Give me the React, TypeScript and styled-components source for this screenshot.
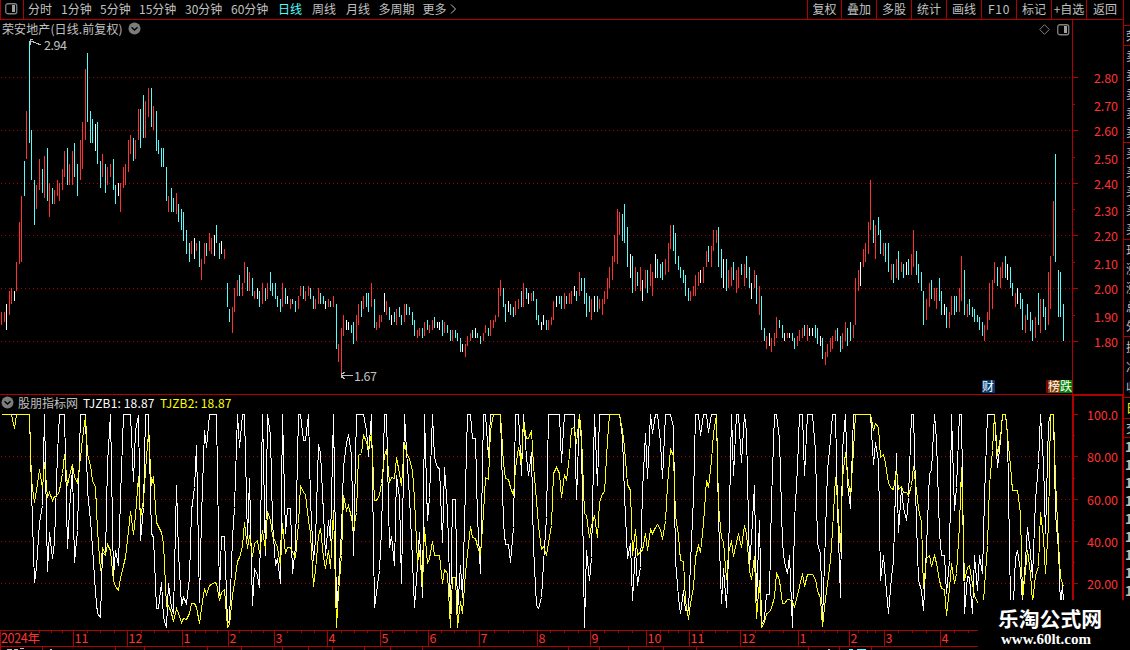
import React from 'react';
import styled, { createGlobalStyle } from 'styled-components';

const RED = '#b00000';
const LABEL_RED = '#ff3232';
const CYAN = '#54fcfc';
const GREY = '#c0c0c0';
const FONT = "'Noto Sans CJK SC', 'Liberation Sans', sans-serif";

interface Period {
	label: string;
	width: number;
	active?: boolean;
}

const PERIODS: Period[] = [
	{ label: '分时', width: 33 },
	{ label: '1分钟', width: 39 },
	{ label: '5分钟', width: 39 },
	{ label: '15分钟', width: 46 },
	{ label: '30分钟', width: 46 },
	{ label: '60分钟', width: 47 },
	{ label: '日线', width: 34, active: true },
	{ label: '周线', width: 34 },
	{ label: '月线', width: 32.5 },
	{ label: '多周期', width: 44 },
	{ label: '更多', width: 27 }
];

const TOOLS = [
	{ label: '复权', width: 34 },
	{ label: '叠加', width: 35 },
	{ label: '多股', width: 35 },
	{ label: '统计', width: 35 },
	{ label: '画线', width: 35 },
	{ label: 'F10', width: 35, spacing: 0.7 },
	{ label: '标记', width: 35 },
	{ label: '+自选', width: 35 },
	{ label: '返回', width: 37 }
];

// x, high, low, colour (r = up, c = down, w = flat)
const BARS = `1 312 325 r,4 312 322 r,6 304 330 w,9 291 315 r,11 288 304 r,14 291 301 w,16 262 291 r,19 222 264 r,21 196 262 r,24 161 196 c,
26 111 159 r,29 41 143 c,31 130 180 c,34 180 225 c,36 185 209 r,39 159 190 r,42 169 193 c,44 156 198 r,47 148 201 c,49 183 217 r,
52 188 204 c,54 190 204 r,57 180 196 r,59 183 201 r,62 169 190 r,64 151 177 r,67 148 185 c,69 164 185 r,72 151 185 r,74 143 177 c,
77 164 196 c,80 140 180 r,82 122 169 r,85 69 140 r,87 53 122 c,90 111 143 c,92 119 143 c,95 124 151 w,97 122 164 c,100 161 188 c,
102 154 177 r,105 164 193 c,107 167 185 r,110 164 177 r,113 159 190 c,115 185 204 c,118 183 196 w,120 183 212 r,123 167 188 r,125 164 185 r,
128 140 172 r,130 135 154 r,133 138 161 c,135 140 159 r,138 109 140 r,140 109 148 c,143 95 138 c,145 101 138 r,148 88 117 r,151 88 127 c,
153 106 130 r,156 111 151 c,158 140 154 c,161 148 167 c,163 148 167 c,166 167 201 c,168 196 212 r,171 188 212 c,173 198 212 c,176 193 214 r,
178 204 222 c,181 209 230 c,183 212 241 c,186 230 254 c,189 243 262 c,191 241 254 r,194 238 259 w,196 243 251 r,199 241 267 c,201 259 280 r,
204 243 264 r,206 243 256 c,209 233 251 r,211 238 254 r,214 235 256 w,216 225 243 c,219 243 259 c,221 241 254 w,224 249 259 r,227 283 307 c,
229 309 322 c,232 307 333 r,234 288 312 r,237 280 296 r,239 275 296 c,242 283 296 r,244 262 283 r,247 267 291 c,249 272 291 r,252 278 296 c,
254 291 299 r,257 288 299 w,259 291 307 c,262 283 304 r,265 288 301 c,267 283 299 r,270 272 291 c,272 283 296 c,275 283 299 c,277 296 307 c,
280 299 312 c,282 283 307 r,285 288 304 c,287 296 304 w,290 299 309 r,292 299 304 c,295 301 312 c,298 296 309 r,300 286 296 r,303 286 299 c,
305 291 301 r,308 286 296 r,310 288 299 c,313 296 309 c,315 299 309 r,318 288 304 r,320 293 304 c,323 296 304 c,325 301 309 w,328 299 307 r,
330 301 307 c,333 296 307 r,336 304 349 c,338 344 362 r,341 328 374 r,343 315 336 r,346 320 330 w,348 322 330 w,351 325 333 c,353 322 344 c,
356 315 341 r,358 304 325 r,361 301 317 c,363 296 309 r,366 293 307 c,368 293 312 c,371 283 307 r,374 299 328 c,376 322 330 r,379 315 328 r,
381 315 322 r,384 293 312 w,386 301 315 r,389 307 320 c,391 315 325 w,394 312 322 c,396 309 325 r,399 307 317 c,401 315 325 c,404 304 322 r,
406 304 315 c,409 307 315 c,412 312 325 c,414 320 336 c,417 330 338 r,419 328 336 r,422 328 338 c,424 322 336 r,427 320 330 c,429 325 333 r,
432 320 330 r,434 317 328 c,437 322 328 w,439 322 330 w,442 320 336 c,444 322 333 r,447 325 333 c,450 330 341 c,452 330 341 r,455 330 338 c,
457 333 341 c,460 338 352 c,462 344 352 w,465 344 357 r,467 336 346 r,470 333 341 r,472 330 338 c,475 328 338 w,477 333 338 c,480 336 344 c,
483 333 341 r,485 325 333 r,488 328 336 c,490 320 336 r,493 320 328 r,495 315 322 r,498 288 317 r,500 280 296 r,503 288 307 c,505 304 322 c,
508 301 312 w,510 304 315 c,513 307 317 c,515 301 315 r,518 299 309 r,521 291 307 c,523 283 307 r,526 288 299 c,528 293 304 w,531 293 301 r,
533 291 301 c,536 299 320 c,538 315 325 c,541 322 330 w,543 315 325 w,546 320 330 c,548 320 330 r,551 317 325 r,553 301 320 r,556 296 307 w,
559 296 304 c,561 296 309 c,564 293 309 r,566 296 304 c,569 293 304 r,571 291 304 r,574 286 296 w,576 291 301 c,579 272 296 r,581 278 291 c,
584 278 304 c,586 293 317 c,589 296 312 c,591 299 320 r,594 296 312 w,597 296 312 c,599 299 309 r,602 299 315 r,604 291 304 r,607 278 299 r,
609 267 288 r,612 256 280 r,614 235 262 r,617 209 264 r,619 212 235 r,622 214 241 c,624 204 243 c,627 227 267 c,630 254 278 w,632 256 293 c,
635 267 291 r,637 272 286 c,640 267 291 r,642 280 301 w,645 270 288 r,647 270 293 c,650 264 286 r,652 272 296 r,655 254 278 w,657 259 278 c,
660 264 278 c,662 262 280 c,665 259 275 r,668 243 272 r,670 225 249 r,673 225 251 c,675 233 264 c,678 256 270 c,680 267 278 c,683 270 283 c,
685 275 296 c,688 288 301 c,690 291 301 r,693 286 296 r,695 275 296 r,698 272 286 r,700 270 283 w,703 267 283 r,706 251 267 r,708 246 262 c,
711 246 267 r,713 230 251 r,716 230 243 r,718 227 267 c,721 249 278 c,723 259 288 w,726 259 291 c,728 270 288 r,731 267 286 r,733 262 280 c,
736 270 293 r,738 267 288 r,741 264 275 c,744 264 286 r,746 256 278 c,749 267 288 c,751 283 299 w,754 270 288 r,756 275 304 c,759 286 315 r,
761 296 330 c,764 328 341 c,766 336 349 r,769 333 346 w,771 338 352 r,774 333 346 r,776 317 338 r,779 320 328 c,782 325 338 c,784 333 341 w,
787 333 338 r,789 333 338 w,792 333 341 c,794 338 349 c,797 336 346 r,799 330 341 r,802 328 338 r,804 325 336 c,807 325 341 r,809 328 336 w,
812 328 336 w,815 325 338 c,817 328 344 c,820 336 346 w,822 338 359 c,825 352 365 r,827 344 357 r,830 338 352 r,832 336 349 r,835 330 341 r,
837 328 341 c,840 336 352 c,842 333 349 r,845 322 341 r,847 328 346 c,850 322 341 c,853 325 338 r,855 278 325 r,858 270 291 r,860 262 286 w,
863 249 267 r,865 243 262 r,868 222 254 r,870 180 230 r,873 220 243 c,875 225 259 r,878 217 235 c,880 230 254 c,883 243 256 r,885 243 262 c,
888 243 272 c,891 264 280 r,893 264 283 c,896 259 278 r,898 251 280 c,901 262 272 r,903 264 278 c,906 262 275 w,908 259 275 c,911 254 275 r,
913 230 267 r,916 251 275 c,918 264 283 c,921 272 291 c,923 291 325 c,926 299 320 r,929 283 307 r,931 280 299 c,934 288 301 r,936 288 309 r,
939 278 301 c,941 291 315 c,944 304 315 w,946 307 328 c,949 312 328 r,951 296 315 r,954 296 315 c,956 296 312 c,959 288 312 r,961 256 301 r,
964 270 315 c,967 304 317 r,969 299 315 c,972 307 317 c,974 309 322 c,977 315 322 c,979 317 330 c,982 322 336 c,984 325 341 r,987 312 330 r,
989 283 320 r,992 280 309 r,994 262 283 r,997 267 286 c,1000 267 288 r,1002 262 278 r,1005 256 278 c,1007 264 280 w,1010 267 288 c,1012 283 296 c,
1015 293 307 r,1017 288 304 w,1020 293 309 c,1022 299 330 c,1025 315 333 r,1027 304 320 c,1030 312 331 c,1032 320 341 c,1035 317 338 r,1038 293 325 c,
1040 299 333 r,1043 299 317 c,1045 307 330 c,1048 272 325 r,1050 256 309 r,1053 201 256 r,1055 154 262 c,1058 270 317 c,1060 272 317 c,1063 304 341 c`
	.split(',')
	.map((s) => s.trim().split(' '));

const TJZB1 = `1,414 29,414 31,490 34,582 36,567 39,522 42,505 44,414 47,571 49,532 52,558 54,542 57,453 59,414 64,414 67,548 69,510 72,468 74,562 77,530
80,414 85,414 87,490 90,520 92,547 95,592 97,613 100,617 102,552 105,555 107,463 110,414 113,577 115,550 118,565 120,497 123,414 130,414 133,481
135,430 138,415 140,540 143,507 145,414 148,414 151,533 153,537 156,608 158,608 161,582 163,617 166,627 168,583 171,607 173,613 176,485 178,553
181,605 183,597 186,603 189,577 191,510 194,487 196,445 199,602 201,517 204,430 206,447 209,414 216,414 219,595 221,536 224,536 227,623 229,620
232,537 234,507 237,414 239,447 242,414 244,414 247,538 249,478 252,605 254,568 257,575 259,587 262,414 265,555 267,414 270,435 272,522 275,565
277,558 280,583 282,414 285,533 287,508 290,508 292,573 295,546 298,414 300,414 303,440 305,440 308,414 310,500 313,560 315,540 318,444 320,452
323,513 325,555 328,520 330,540 333,414 336,607 338,585 341,530 343,467 346,443 348,434 351,455 353,555 356,414 363,414 366,430 368,456 371,414
374,607 376,592 379,570 381,530 384,414 386,414 389,547 391,536 394,565 396,475 399,497 401,583 404,414 406,450 409,497 412,560 414,607 417,565
419,532 422,597 424,414 427,520 429,497 432,414 434,457 437,467 439,468 442,542 444,467 447,510 450,613 452,499 455,499 457,613 460,565 462,597
465,487 467,414 470,414 472,438 475,438 477,517 480,573 483,414 485,414 488,457 490,414 500,414 503,523 505,544 508,544 510,562 513,527 515,414
518,414 521,475 523,414 526,457 528,475 531,452 533,547 536,605 538,608 541,597 543,563 546,517 548,414 559,414 561,462 564,414 574,414 576,499
579,414 581,443 584,627 586,550 589,580 591,557 594,414 597,485 599,414 619,414 622,437 624,495 627,558 630,543 632,600 635,548 637,585 640,567
642,490 645,433 647,478 650,414 652,433 655,414 657,414 660,442 662,478 665,414 670,414 673,427 675,560 678,597 680,613 683,590 685,610 688,610
690,563 693,497 695,414 698,414 700,435 703,414 706,414 708,432 711,414 716,414 718,517 721,603 723,568 726,607 728,557 731,414 733,475 736,414
738,414 741,462 744,414 746,432 749,567 751,537 754,485 756,600 759,520 761,625 764,618 766,594 769,594 771,500 774,414 776,414 779,438 782,543
784,562 787,573 789,555 792,627 794,520 797,467 799,414 802,414 804,475 807,414 812,414 815,450 817,543 820,553 822,620 825,533 827,470 830,440
832,414 835,414 837,507 840,597 842,450 845,414 847,483 850,508 853,414 870,414 873,464 875,442 878,460 880,580 883,555 885,580 888,613 891,577
893,560 896,453 898,532 901,487 903,507 906,520 908,497 911,414 913,414 916,523 918,580 921,590 923,610 926,547 929,473 931,470 934,414 936,440
939,533 941,555 944,555 946,593 949,560 951,414 954,510 956,487 959,414 961,414 964,613 967,576 969,577 972,613 974,555 977,590 979,555 982,573
984,497 987,414 994,414 997,467 1000,440 1002,414 1005,414 1007,433 1010,602 1013,602 1015,557 1017,550 1020,570 1022,602 1025,560 1027,527
1030,553 1032,577 1035,500 1038,463 1040,414 1043,463 1045,533 1048,423 1050,414 1053,414 1055,513 1058,550 1060,605 1062,585 1063,602`;

const TJZB2 = `1,414 11,414 14,428 16,414 29,414 31,480 34,502 36,490 39,469 42,488 44,462 47,497 49,492 52,500 54,496 57,495 59,490 62,473 64,454 67,485
69,475 72,464 74,477 77,482 80,457 82,438 85,416 87,453 90,465 92,480 95,487 97,530 100,570 102,547 105,554 107,544 110,550 113,580 115,586 118,590
120,578 123,565 125,557 128,530 130,511 133,534 135,515 138,476 140,518 143,500 145,470 148,432 151,485 153,476 156,522 158,526 161,532 163,543
166,606 168,605 171,613 173,621 176,608 178,613 181,622 183,618 186,619 189,613 191,603 194,603 196,607 199,623 201,608 204,588 206,594 209,585
211,584 214,582 216,583 219,600 221,592 224,589 227,627 229,624 232,595 234,583 237,561 239,557 242,546 244,522 247,548 249,535 252,556 254,543
257,540 259,553 262,530 265,548 267,511 270,520 272,535 275,542 277,547 280,565 282,523 285,553 287,547 290,547 292,552 295,557 298,523 300,485
303,492 305,494 308,520 310,533 313,586 315,570 318,535 320,528 323,557 325,568 328,550 330,568 333,510 336,627 338,592 341,555 343,495 346,510
348,505 351,517 353,530 356,512 358,455 361,453 363,434 366,442 368,448 371,433 374,500 376,500 379,495 381,483 384,455 386,449 389,482 391,477
394,478 396,457 399,473 401,485 404,442 406,452 409,459 412,470 414,498 417,563 419,550 422,588 424,527 427,563 429,558 432,541 434,555 437,555
439,555 442,583 444,569 447,573 450,627 452,577 455,577 457,627 460,601 462,613 465,572 467,553 470,526 472,537 475,538 477,546 480,555 483,513
485,477 488,479 490,430 493,414 500,414 503,463 505,478 508,479 510,487 513,495 515,468 518,447 521,463 523,422 526,438 528,438 531,430 533,465
536,500 538,525 541,549 543,546 546,555 548,543 551,525 553,473 556,467 559,473 561,497 564,474 566,480 569,455 571,428 574,427 576,443 579,414
581,435 584,513 586,515 589,537 591,525 594,515 597,537 599,502 602,493 604,492 607,440 609,414 619,414 622,430 624,447 627,484 630,490 632,555
635,529 637,555 640,551 642,550 645,533 647,550 650,529 652,533 655,527 657,524 660,529 662,539 665,520 667,485 670,449 673,455 675,515 678,535
680,560 683,561 685,600 688,619 690,603 693,587 695,557 698,545 700,552 703,523 706,480 708,487 711,460 713,433 716,414 718,505 721,538 723,541
726,579 728,553 731,540 733,556 736,542 738,533 741,547 744,525 746,533 749,570 751,579 754,556 756,618 759,580 761,627 764,622 766,613 769,612
771,607 774,597 776,572 779,580 782,603 784,603 787,599 789,599 792,602 794,606 797,595 799,586 802,573 804,586 807,574 812,574 815,579 817,590
820,598 822,626 825,598 827,583 830,560 832,530 835,477 837,500 840,551 842,478 845,452 847,475 850,495 853,450 855,414 870,414 873,430 875,423
878,427 880,457 883,454 885,463 888,483 891,488 893,489 896,470 898,489 901,486 903,492 906,492 908,495 911,485 913,466 916,490 918,508 921,522
923,588 926,558 929,555 931,566 934,555 936,563 939,580 941,588 944,589 946,615 949,588 951,563 954,583 956,573 959,525 961,467 964,580 967,567
969,565 972,583 974,595 977,602 983,601 987,545 989,485 992,450 994,414 997,455 1000,437 1002,414 1005,414 1007,435 1010,465 1012,490 1017,490
1020,513 1022,597 1025,570 1027,550 1030,573 1032,602 1035,575 1038,566 1040,512 1043,537 1045,573 1048,525 1050,414 1053,414 1055,480 1058,543
1060,577 1063,586`;

const PRICE_LABELS: [string, number][] = [
	['2.80', 78],
	['2.70', 106],
	['2.60', 131],
	['2.50', 159],
	['2.40', 184],
	['2.30', 211],
	['2.20', 236],
	['2.10', 264],
	['2.00', 289],
	['1.90', 317],
	['1.80', 342]
];
const PRICE_GRID = [77, 130, 183, 235, 288, 341];
const PRICE_MINOR = [104, 157, 209, 262, 315];

const IND_LABELS: [string, number][] = [
	['100.0', 415],
	['80.00', 457],
	['60.00', 500],
	['40.00', 542],
	['20.00', 584]
];
const IND_GRID = [456, 499, 541, 583];
const IND_MINOR = [435, 478, 520, 562];

const MONTHS: [string, number][] = [
	['11', 73],
	['12', 127],
	['1', 182],
	['2', 228],
	['3', 274],
	['4', 327],
	['5', 380],
	['6', 428],
	['7', 479],
	['8', 537],
	['9', 590],
	['10', 646],
	['11', 689],
	['12', 740],
	['1', 798],
	['2', 849],
	['3', 884],
	['4', 940]
];
const WEEKS = [
	39, 51, 62, 87, 100, 114, 141, 154, 168, 195, 205, 217, 239, 251, 263, 287,
	301, 314, 341, 354, 367, 392, 404, 416, 441, 454, 466, 494, 508, 523, 550,
	564, 578, 604, 618, 632, 660, 668, 678, 702, 715, 727, 755, 769, 783, 811,
	824, 837, 858, 867, 875, 898, 912, 926, 954, 968
];
const STATUS_TICKS = [
	0, 42, 115, 144, 207, 241, 282, 308, 332, 364, 390, 422, 568, 599, 628, 663,
	696, 808, 839, 871
];

const QUOTE_ROWS = [
	{ top: 20, height: 6, chars: [] },
	{ top: 26, height: 20, chars: ['荣'] },
	{ top: 46, height: 97, chars: ['卖', '卖', '卖', '卖', '卖'] },
	{ top: 143, height: 97, chars: ['买', '买', '买', '买', '买'] },
	{ top: 240, height: 97, chars: ['现', '涨', '涨', '总', '外'] },
	{ top: 337, height: 61, chars: ['换', '净', '收'] }
];

const barPath = (color: string) =>
	BARS.filter((b) => b[3] === color)
		.map(([x, high, low]) => `M${+x + 0.5} ${high}V${low}`)
		.join('');

const hLines = (ys: number[], x1: number, x2: number) =>
	ys.map((y) => `M${x1} ${y + 0.5}H${x2}`).join('');

const vLines = (xs: number[], y1: number, y2: number) =>
	xs.map((x) => `M${x + 0.5} ${y1}V${y2}`).join('');

const PanelIcon = () => (
	<svg width="13" height="12" viewBox="0 0 13 12">
		<rect
			x="0.75"
			y="0.75"
			width="11"
			height="10"
			rx="2"
			fill="none"
			stroke="#808080"
			strokeWidth="1.3"
		/>
		<rect x="7" y="2" width="3" height="7" fill="#a0a0a0" />
	</svg>
);

const DropIcon = () => (
	<svg width="13" height="13" viewBox="0 0 13 13">
		<circle cx="6.5" cy="6.5" r="6" fill="#7c7c7c" />
		<path d="M3.5 5.2L6.5 8L9.5 5.2" fill="none" stroke="#000" strokeWidth="1.4" />
	</svg>
);

const PriceChart = () => (
	<Plot width="1123" height="374" viewBox="0 20 1123 374">
		<g fill="none" shapeRendering="crispEdges">
			<path d={hLines(PRICE_GRID, 1, 1072)} stroke={RED} strokeDasharray="1 3" />
			<path
				d={`M1072.5 20V394${hLines(PRICE_GRID, 1072, 1078)}${hLines(
					PRICE_MINOR,
					1072,
					1075
				)}`}
				stroke={RED}
			/>
			<path d={barPath('r')} stroke={LABEL_RED} />
			<path d={barPath('c')} stroke={CYAN} />
			<path d={barPath('w')} stroke="#fff" />
			<path
				d="M30 39.5H33M31 41L41 45M30.5 40V45M341 375.5H353M341.5 373V378M341 375L345 372M341 376L345 379"
				stroke={GREY}
			/>
		</g>
		<AxisText x="44" y="50" $color={GREY} textLength="23">
			2.94
		</AxisText>
		<AxisText x="354" y="381" $color={GREY} textLength="23">
			1.67
		</AxisText>
		{PRICE_LABELS.map(([text, y]) => (
			<AxisText key={text} x="1094" y={y + 4.5} textLength="24">
				{text}
			</AxisText>
		))}
	</Plot>
);

const IndicatorChart = () => (
	<Plot width="1123" height="235" viewBox="0 395 1123 235">
		<g fill="none" shapeRendering="crispEdges">
			<path d={hLines(IND_GRID, 1, 1072)} stroke={RED} strokeDasharray="1 3" />
			<path
				d={`M1072.5 395.5H1123M1072.5 395V630M1073.5 395V630M1122.5 395V630${hLines(
					[414, ...IND_GRID],
					1073,
					1078
				)}${hLines(IND_MINOR, 1073, 1075)}`}
				stroke={RED}
			/>
			<g transform="translate(0.5 0.5)">
				<polyline points={TJZB1} stroke="#fff" />
				<polyline points={TJZB2} stroke="#ff0" />
			</g>
		</g>
		{IND_LABELS.map(([text, y]) => (
			<AxisText key={text} x="1087" y={y + 4.5} textLength="31">
				{text}
			</AxisText>
		))}
	</Plot>
);

const TimeAxis = () => (
	<Plot width="1123" height="20" viewBox="0 630 1123 20">
		<g fill="none" stroke={RED} shapeRendering="crispEdges">
			<path d="M0 630.5H1123M0 646.5H1123" />
			<path
				d={
					vLines([0, ...MONTHS.map((m) => m[1])], 630, 646) +
					vLines(WEEKS, 631, 633) +
					vLines(STATUS_TICKS, 647, 650)
				}
			/>
			<path d="M7 649.5H12M14 649.5H18M20 648.5H24M50 649.5H52M828 649.5H830" stroke={GREY} />
			<path d="M849 649.5H853M857 649.5H866" stroke={CYAN} />
		</g>
		<AxisText x="1" y="643" textLength="39">
			2024年
		</AxisText>
		{MONTHS.map(([text, x]) => (
			<AxisText key={x} x={x + 1.5} y="643">
				{text}
			</AxisText>
		))}
	</Plot>
);

export default function App() {
	return (
		<Screen>
			<GlobalStyle />
			<Main>
				<Toolbar>
					<PanelButton>
						<PanelIcon />
					</PanelButton>
					<Periods>
						{PERIODS.map((p) => (
							<PeriodItem key={p.label} $width={p.width} $active={p.active}>
								{p.label}
							</PeriodItem>
						))}
						<svg width="7" height="10" viewBox="0 0 7 10">
							<path d="M1 0.5L5.5 5L1 9.5" fill="none" stroke={GREY} />
						</svg>
					</Periods>
					{TOOLS.map((t) => (
						<ToolButton key={t.label} $width={t.width} $spacing={t.spacing}>
							{t.label}
						</ToolButton>
					))}
				</Toolbar>
				<PricePane>
					<PriceChart />
					<PaneTitle>
						荣安地产(日线.前复权)
						<DropIcon />
					</PaneTitle>
					<PaneTools>
						<svg width="11" height="11" viewBox="0 0 11 11">
							<path d="M5.5 0.7L10.3 5.5L5.5 10.3L0.7 5.5Z" fill="none" stroke="#808080" />
						</svg>
						<PanelIcon />
					</PaneTools>
					<Badges>
						<Badge $bg="#063a72" $width={13}>
							财
						</Badge>
						<BadgeGroup>
							<Badge $bg="#800000" $width={2} />
							<Badge $bg="#843c00" $width={12}>
								榜
							</Badge>
							<Badge $bg="#008000" $width={12}>
								跌
							</Badge>
						</BadgeGroup>
					</Badges>
				</PricePane>
				<IndicatorPane>
					<IndicatorChart />
					<IndicatorTitle>
						<DropIcon />
						<IndicatorName>股朋指标网</IndicatorName>
						<Value $color="#fff">TJZB1: 18.87</Value>
						<Value $color="#ff0">TJZB2: 18.87</Value>
					</IndicatorTitle>
				</IndicatorPane>
				<TimeAxis />
			</Main>
			<QuoteStrip>
				{QUOTE_ROWS.map((row) => (
					<QuoteBlock key={row.top} $height={row.height}>
						{row.chars.map((c, i) => (
							<QuoteCell key={i}>{c}</QuoteCell>
						))}
					</QuoteBlock>
				))}
				<QuoteBlock $height={21}>
					<QuoteCell $color="#ff0">日</QuoteCell>
				</QuoteBlock>
				<QuoteBlock $height={19}>
					<QuoteCell>交</QuoteCell>
				</QuoteBlock>
				<Ticks>
					{Array.from({ length: 9 }, (_, i) => (
						<Tick key={i}>1</Tick>
					))}
				</Ticks>
			</QuoteStrip>
			<Watermark>
				<SiteName>乐淘公式网</SiteName>
				<SiteUrl>www.60lt.com</SiteUrl>
			</Watermark>
		</Screen>
	);
}

const GlobalStyle = createGlobalStyle`
	* {
		box-sizing: border-box;
	}

	body {
		margin: 0;
		background: #000;
		overflow: hidden;
	}
`;

const Screen = styled.div`
	position: relative;
	display: flex;
	width: 1130px;
	height: 650px;
	overflow: hidden;
	background: #000;
	color: ${GREY};
	font: 12px/1 ${FONT};
	white-space: nowrap;
`;

const Main = styled.div`
	display: flex;
	flex-direction: column;
	width: 1123px;
`;

const Toolbar = styled.div`
	display: flex;
	height: 20px;
	border-bottom: 1px solid ${RED};
`;

const PanelButton = styled.div`
	display: flex;
	width: 24px;
	padding: 3px 0 0 4px;
	border: solid ${RED};
	border-width: 0 1px;
`;

const Periods = styled.div`
	display: flex;
	flex: 1;
	align-items: center;
	padding-left: 4px;
	padding-bottom: 1px;
`;

const PeriodItem = styled.span<{ $width: number; $active?: boolean }>`
	width: ${({ $width }) => $width}px;
	flex: none;
	color: ${({ $active }) => ($active ? CYAN : GREY)};
`;

const ToolButton = styled.div<{ $width: number; $spacing?: number }>`
	display: flex;
	width: ${({ $width }) => $width}px;
	padding-bottom: 1px;
	align-items: center;
	justify-content: center;
	border-left: 1px solid ${RED};
	letter-spacing: ${({ $spacing }) => $spacing || 0}px;
`;

const Plot = styled.svg`
	display: block;
`;

const AxisText = styled.text<{ $color?: string }>`
	fill: ${({ $color }) => $color || LABEL_RED};
	font: 12.5px ${FONT};
`;

const PricePane = styled.div`
	position: relative;
	height: 375px;
	border-bottom: 1px solid ${RED};
`;

const PaneTitle = styled.div`
	position: absolute;
	top: 2px;
	left: 2px;
	display: flex;
	align-items: center;
	gap: 5px;
	letter-spacing: 0.1px;
`;

const PaneTools = styled.div`
	position: absolute;
	top: 4px;
	right: 53px;
	display: flex;
	gap: 7px;
`;

const Badges = styled.div`
	position: absolute;
	right: 51px;
	bottom: 1px;
	display: flex;
	gap: 51px;
`;

const BadgeGroup = styled.div`
	display: flex;
`;

const Badge = styled.span<{ $bg: string; $width: number }>`
	width: ${({ $width }) => $width}px;
	height: 13px;
	line-height: 12px;
	background: ${({ $bg }) => $bg};
	color: #fff;
`;

const IndicatorPane = styled.div`
	position: relative;
	height: 235px;
`;

const IndicatorTitle = styled.div`
	position: absolute;
	top: 1px;
	left: 1px;
	display: flex;
	align-items: center;
`;

const IndicatorName = styled.span`
	width: 65px;
	margin-left: 4px;
`;

const Value = styled.span<{ $color: string }>`
	width: 77px;
	color: ${({ $color }) => $color};
	letter-spacing: 0.15px;
`;

const QuoteStrip = styled.div`
	width: 7px;
	height: 600px;
	padding-top: 20px;
	overflow: hidden;
	border-left: 1px solid ${RED};
`;

const QuoteBlock = styled.div<{ $height: number }>`
	display: flex;
	flex-direction: column;
	justify-content: space-around;
	height: ${({ $height }) => $height}px;
	padding-left: 2px;
	border-bottom: 1px solid ${RED};
`;

const QuoteCell = styled.span<{ $color?: string }>`
	color: ${({ $color }) => $color || GREY};
`;

const Ticks = styled.div`
	padding-top: 0;
`;

const Tick = styled.div`
	height: 18px;
	padding-left: 1px;
	font-size: 13px;
	font-weight: bold;
	line-height: 18px;
`;

const Watermark = styled.div`
	position: absolute;
	left: 978px;
	top: 600px;
	width: 152px;
	height: 50px;
	padding: 8px 0 0 20px;
	background: #000;
	color: #fff;
`;

const SiteName = styled.div`
	font-size: 20.8px;
	font-weight: bold;
	line-height: 20px;
`;

const SiteUrl = styled.div`
	padding: 3px 0 0 3px;
	font: bold 15px/16px 'Liberation Serif', serif;
`;
